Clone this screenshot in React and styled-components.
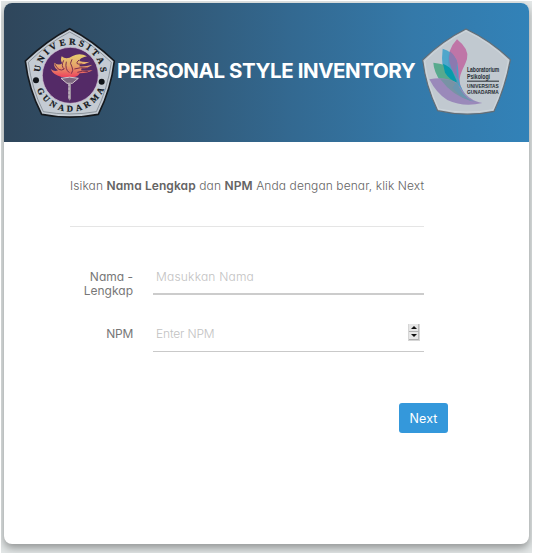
import React from 'react';
import styled, { createGlobalStyle } from 'styled-components';

const GlobalStyle = createGlobalStyle`
  * { box-sizing: border-box; }
  body { margin: 0; background: #fff; font-family: Inter, "Open Sans", sans-serif; font-feature-settings: "cv11"; }
`;

const Page = styled.main`
  width: 536px;
  height: 555px;
  padding: 1px 4px 2px 1px;
`;

const Backdrop = styled.div`
  height: 552px;
  padding: 2px 2px 9px 3px;
  background: #e3e7e7;
  overflow: hidden;
`;

const Card = styled.section`
  width: 525px;
  height: 541px;
  border-radius: 8px;
  background: #fff;
  overflow: hidden;
  box-shadow: 0 4px 9px rgba(0, 0, 0, 0.36);
`;

const Header = styled.header`
  display: flex;
  height: 139px;
  padding: 24px 0 0 19px;
  background: linear-gradient(90deg, #2f465b 0%, #315571 28%, #336991 55%, #3479a9 78%, #3282b8 100%);
`;

const Title = styled.h1`
  width: 305px;
  margin: 30px 0 0;
  padding-left: 1px;
  color: #fff;
  font-size: 20.5px;
  line-height: 28px;
  font-weight: 700;
  letter-spacing: ${(p) => p.$tracking};
  white-space: nowrap;
`;

const Logo = styled.svg`
  display: block;
  flex: none;
  width: ${(p) => p.$width}px;
  height: ${(p) => p.$height}px;
`;

const Form = styled.form`
  width: 354px;
  margin-left: 66px;
  padding-top: 35px;
`;

const Intro = styled.p`
  height: 50px;
  margin: 0;
  border-bottom: 1px solid #e5e5e5;
  color: #646464;
  font-size: 12px;
  font-weight: 350;
  line-height: 18px;
  letter-spacing: ${(p) => p.$tracking};
  white-space: nowrap;
  b { font-weight: 600; }
`;

const Field = styled.div`
  display: grid;
  grid-template-columns: 63px 271px;
  column-gap: 20px;
  margin-top: ${(p) => p.$gap}px;
`;

const Label = styled.label`
  padding-top: ${(p) => p.$top}px;
  color: #777;
  font-size: 12px;
  line-height: 14px;
  letter-spacing: ${(p) => p.$tracking};
  text-align: right;
`;

const InputLine = styled.div`
  display: flex;
  align-items: center;
  height: ${(p) => p.$height}px;
  padding: 0 4px ${(p) => p.$lift}px 3px;
  border-bottom: ${(p) => p.$line};
`;

const Input = styled.input`
  flex: 1;
  min-width: 0;
  height: 24px;
  padding: 0;
  border: 0;
  outline: 0;
  background: transparent;
  color: #666;
  font: 350 12px Inter, sans-serif;
  font-feature-settings: "cv11";
  letter-spacing: ${(p) => p.$tracking};
  &::placeholder { color: #c2c2c2; opacity: 1; }
`;

const Stepper = styled.div`
  display: grid;
  grid-template-rows: 1fr 1fr;
  width: 12px;
  height: 17px;
  margin-bottom: 2px;
  background: #ececec;
  border: 1px solid #d6d6d6;
  border-top: 0;
`;

const StepButton = styled.button`
  display: flex;
  align-items: center;
  justify-content: center;
  padding: 0;
  border: 0;
  border-right: 1px solid #bbb;
  border-bottom: 1px solid #b0b0b0;
  background: #e6e6e6;
  &::after {
    content: '';
    border-left: 3px solid transparent;
    border-right: 3px solid transparent;
    ${(p) => (p.$up ? 'border-bottom' : 'border-top')}: 3px solid #111;
  }
`;

const Actions = styled.div`
  display: flex;
  justify-content: flex-end;
  width: 378px;
  padding-top: 51px;
`;

const NextButton = styled.button`
  width: 49px;
  height: 30px;
  padding: 0;
  border: 0;
  border-radius: 3px;
  background: #3498db;
  color: #fff;
  font: 12.5px Inter, sans-serif;
  letter-spacing: 0.15px;
`;

function UniversityLogo() {
  return (
    <Logo viewBox="69 81 279 276" $width={93} $height={92} aria-label="Universitas Gunadarma">
      <defs>
        <path id="upper-ring" d="M119 226 A92 92 0 0 1 303 226" />
        <path id="lower-ring" d="M102 226 A109 109 0 0 0 320 226" />
        <linearGradient id="flame" x2="0" y2="1">
          <stop stopColor="#e7ce70" />
          <stop offset=".5" stopColor="#e6a469" />
          <stop offset="1" stopColor="#ed405c" />
        </linearGradient>
      </defs>
      <path d="M209 86 Q278 121 343 183 Q333 268 295 343 Q209 360 125 343 Q86 268 76 183 Q140 121 209 86Z" fill="#c4cbd3" stroke="#15191e" strokeWidth="5" strokeLinejoin="round" />
      <path d="M209 96 Q272 128 334 187 Q323 266 289 335 Q209 349 130 335 Q95 266 85 187 Q145 129 209 96Z" fill="none" stroke="#555e67" strokeWidth="1.5" />
      <circle cx="211" cy="226" r="84" fill="#542a67" stroke="#d9c6d6" strokeWidth="2" />
      <g fill="#14181c" stroke="#14181c" strokeWidth=".7" fontFamily="Liberation Serif, serif" fontWeight="700" fontSize="27">
        <text><textPath href="#upper-ring" startOffset="9" textLength="271">UNIVERSITAS</textPath></text>
        <text fontSize="26"><textPath href="#lower-ring" startOffset="44" textLength="256">GUNADARMA</textPath></text>
      </g>
      <circle cx="108" cy="241" r="9" fill="#111519" />
      <circle cx="305" cy="245" r="9" fill="#111519" />
      <path d="M184 231 Q159 224 152 207 Q164 217 174 211 Q160 202 163 188 Q176 198 187 190 Q180 181 185 169 Q199 181 218 168 Q239 157 261 169 Q238 174 238 183 Q252 188 270 185 Q253 194 240 193 L238 199 Q258 200 277 194 Q262 206 245 205 L243 211 Q262 214 278 210 Q264 220 239 220 Q234 230 220 232Z" fill="url(#flame)" />
      <path d="M164 191 Q176 218 193 207 Q182 199 191 181 M199 185 Q194 208 208 218 M216 178 Q207 190 216 201 Q222 210 214 221 M237 180 Q220 195 247 192 M223 207 Q240 201 262 204 M232 217 Q248 211 265 215" fill="none" stroke="#7d304d" strokeWidth="3" />
      <path d="M183 235 Q209 228 235 235 L217 250 H201Z" fill="#7c667f" stroke="#d4c7cd" strokeWidth="3" />
      <path d="M205 248 V296 L209 302 L213 296 V248Z" fill="#9b8e9e" />
      <path d="M207 250V297" stroke="#d7ccd2" strokeWidth="3" strokeDasharray="9 3" />
    </Logo>
  );
}

function LaboratoryLogo() {
  return (
    <Logo viewBox="33 84 273 270" $width={91} $height={90} aria-label="Laboratorium Psikologi">
      <path d="M168 90 Q242 125 301 182 Q286 265 252 337 Q168 355 83 335 Q47 260 38 183 Q97 125 168 90Z" fill="#c1c9d0" stroke="#626d76" strokeWidth="3.5" strokeLinejoin="round" />
      <path d="M168 96 Q238 128 295 185 Q281 263 249 332 Q168 348 86 330 Q52 258 44 186 Q101 129 168 96Z" fill="none" stroke="#d4dce1" strokeWidth="2" />
      <path d="M141 121 Q179 151 171 180 C163 207 143 228 151 258 Q159 286 183 305 Q139 281 123 239 Q107 185 119 157 Q127 135 141 121Z" fill="#bf75a7" />
      <path d="M98 149 Q127 157 140 184 Q145 202 146 238 Q151 277 186 308 Q134 287 111 246 Q91 203 98 149Z" fill="#42a2ca" opacity=".9" />
      <path d="M120 157 Q135 170 142 190 Q137 214 143 240 Q118 205 117 177Z" fill="#8b79b0" />
      <path d="M70 191 Q111 194 127 216 Q139 238 149 267 Q162 292 191 310 Q126 291 94 251 Q71 218 70 191Z" fill="#58aa8e" />
      <path d="M99 194 Q121 203 128 219 Q137 240 143 252 Q118 242 105 221Z" fill="#079aac" />
      <path d="M58 241 Q103 231 136 249 C155 264 163 301 217 312 Q161 326 112 303 Q79 283 58 241Z" fill="#9a89ba" />
      <path d="M91 241 Q125 239 143 257 Q157 286 184 307 Q127 290 91 241Z" fill="#7893a5" />
      <path d="M143 241 C145 279 171 306 213 313 Q159 306 128 267Z" fill="#6297b6" opacity=".65" />
      <g fill="#252c32" fontFamily="Liberation Sans Narrow, Liberation Sans, sans-serif" fontWeight="700">
        <text x="171" y="220" fontSize="20" textLength="97" lengthAdjust="spacingAndGlyphs">Laboratorium</text>
        <text x="171" y="240" fontSize="19" textLength="69" lengthAdjust="spacingAndGlyphs">Psikologi</text>
        <rect x="171" y="245" width="96" height="3" />
        <text x="171" y="268" fontSize="17" textLength="95" lengthAdjust="spacingAndGlyphs">UNIVERSITAS</text>
        <text x="171" y="285" fontSize="16" textLength="95" lengthAdjust="spacingAndGlyphs">GUNADARMA</text>
      </g>
    </Logo>
  );
}

export default function App() {
  return (
    <>
      <GlobalStyle />
      <Page>
        <Backdrop>
          <Card>
            <Header>
              <UniversityLogo />
              <Title $tracking="-0.42px">PERSONAL STYLE INVENTORY</Title>
              <LaboratoryLogo />
            </Header>
            <Form onSubmit={(event) => event.preventDefault()}>
              <Intro $tracking="0.09px">Isikan <b>Nama Lengkap</b> dan <b>NPM</b> Anda dengan benar, klik Next</Intro>
              <Field $gap={36}>
                <Label htmlFor="name" $top={7} $tracking="0px">Nama -<br />Lengkap</Label>
                <InputLine $height={32} $lift={4} $line="2px solid #ccc">
                  <Input id="name" placeholder="Masukkan Nama" $tracking="0.2px" />
                </InputLine>
              </Field>
              <Field $gap={20}>
                <Label htmlFor="npm" $top={9} $tracking="-0.3px">NPM</Label>
                <InputLine $height={34} $lift={2} $line="1px solid #c9c9c9">
                  <Input id="npm" placeholder="Enter NPM" inputMode="numeric" $tracking="-0.15px" />
                  <Stepper>
                    <StepButton type="button" $up aria-label="Increase" />
                    <StepButton type="button" aria-label="Decrease" />
                  </Stepper>
                </InputLine>
              </Field>
              <Actions><NextButton type="submit">Next</NextButton></Actions>
            </Form>
          </Card>
        </Backdrop>
      </Page>
    </>
  );
}
